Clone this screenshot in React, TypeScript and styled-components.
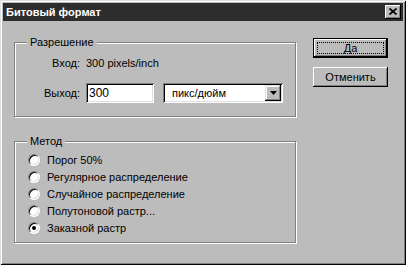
import React from 'react';
import styled, { createGlobalStyle } from 'styled-components';

const GlobalStyle = createGlobalStyle`
  html, body {
    margin: 0;
    padding: 0;
    background: #bcbcbc;
  }
  body {
    font-family: 'Liberation Sans', Arial, sans-serif;
    font-size: 11px;
    color: #000;
  }
`;

const FACE = '#bcbcbc';

const raised = `
  box-shadow: inset -1px -1px 0 #000, inset 1px 1px 0 #fff, inset -2px -2px 0 #808080;
`;
const sunken = `
  box-shadow: inset 1px 1px 0 #808080, inset -1px -1px 0 #fff, inset 2px 2px 0 #000, inset -2px -2px 0 #dfdfdf;
`;

const methods = [
  'Порог 50%',
  'Регулярное распределение',
  'Случайное распределение',
  'Полутоновой растр...',
  'Заказной растр',
];

const App = () => {
  return (
    <>
      <GlobalStyle />
      <Window>
        <TitleBar>
          <Title>Битовый формат</Title>
          <CloseButton aria-label="Закрыть">
            <svg width="8" height="7" viewBox="0 0 8 7">
              <path d="M0.5 0.5 L7.5 6.5 M7.5 0.5 L0.5 6.5" stroke="#000" strokeWidth="1.7" />
            </svg>
          </CloseButton>
        </TitleBar>
        <Content>
          <LeftColumn>
            <Group $height={75}>
              <Legend>Разрешение</Legend>
              <ResolutionGrid>
                <Label>Вход:</Label>
                <Value>300 pixels/inch</Value>
                <Label>Выход:</Label>
                <TextField>300</TextField>
                <Select>
                  <span>пикс/дюйм</span>
                  <ArrowButton>
                    <svg width="7" height="4" viewBox="0 0 7 4">
                      <path d="M0 0 H7 L3.5 4 Z" fill="#000" />
                    </svg>
                  </ArrowButton>
                </Select>
              </ResolutionGrid>
            </Group>
            <Group $height={102} $top={24}>
              <Legend>Метод</Legend>
              <RadioList>
                {methods.map((m, i) => (
                  <RadioRow key={m}>
                    <RadioCircle $checked={i === methods.length - 1} />
                    <span>{m}</span>
                  </RadioRow>
                ))}
              </RadioList>
            </Group>
          </LeftColumn>
          <RightColumn>
            <DefaultButton>
              <FocusRing>Да</FocusRing>
            </DefaultButton>
            <Button>Отменить</Button>
          </RightColumn>
        </Content>
      </Window>
    </>
  );
};
export default App;

const Window = styled.div`
  width: 406px;
  height: 265px;
  box-sizing: border-box;
  padding: 3px;
  background: ${FACE};
  box-shadow: inset 1px 1px 0 #dfdfdf, inset -1px -1px 0 #000, inset 2px 2px 0 #fff,
    inset -2px -2px 0 #808080;
  display: flex;
  flex-direction: column;
`;
const TitleBar = styled.div`
  height: 18px;
  background: #2d2d2d;
  display: flex;
  align-items: center;
  justify-content: space-between;
  padding: 0 2px 0 3px;
`;
const Title = styled.div`
  color: #fff;
  font-weight: 700;
  font-size: 11px;
`;
const CloseButton = styled.div`
  width: 16px;
  height: 14px;
  box-sizing: border-box;
  background: ${FACE};
  ${raised}
  display: flex;
  align-items: center;
  justify-content: center;
  padding-bottom: 1px;
`;
const Content = styled.div`
  display: flex;
  align-items: flex-start;
  gap: 17px;
  padding: 15px 0 0 11px;
`;
const LeftColumn = styled.div`
  display: flex;
  flex-direction: column;
`;
const RightColumn = styled.div`
  display: flex;
  flex-direction: column;
  gap: 9px;
  padding-top: 2px;
`;
const Group = styled.div<{ $height: number; $top?: number }>`
  position: relative;
  width: 282px;
  height: ${(p) => p.$height}px;
  margin-top: ${(p) => p.$top ?? 6}px;
  box-sizing: border-box;
  border: 1px solid #808080;
  box-shadow: 1px 1px 0 #fff, inset 1px 1px 0 #fff;
`;
const Legend = styled.span`
  position: absolute;
  top: -7px;
  left: 12px;
  padding: 0 3px;
  line-height: 13px;
  background: ${FACE};
`;
const ResolutionGrid = styled.div`
  display: grid;
  grid-template-columns: 65px auto auto;
  grid-template-rows: 16px 20px;
  column-gap: 6px;
  row-gap: 12px;
  align-items: center;
  padding-top: 12px;
  justify-content: start;
`;
const Label = styled.div`
  text-align: right;
`;
const Value = styled.div`
  grid-column: 2 / 4;
`;
const TextField = styled.div`
  width: 68px;
  height: 20px;
  box-sizing: border-box;
  background: #fff;
  ${sunken}
  padding: 0 3px;
  display: flex;
  align-items: center;
  font-size: 12px;
`;
const Select = styled.div`
  width: 120px;
  height: 20px;
  margin-left: 3px;
  box-sizing: border-box;
  background: #fff;
  ${sunken}
  display: flex;
  align-items: center;
  justify-content: space-between;
  padding: 2px 2px 2px 9px;
  font-size: 11px;
`;
const ArrowButton = styled.div`
  width: 16px;
  height: 16px;
  box-sizing: border-box;
  background: ${FACE};
  box-shadow: inset -1px -1px 0 #000, inset 1px 1px 0 #dfdfdf, inset -2px -2px 0 #808080,
    inset 2px 2px 0 #fff;
  display: flex;
  align-items: center;
  justify-content: center;
`;
const RadioList = styled.div`
  display: flex;
  flex-direction: column;
  padding: 9px 0 0 13px;
`;
const RadioRow = styled.div`
  height: 17px;
  display: flex;
  align-items: center;
  gap: 7px;
  font-size: 11px;
`;
const RadioCircle = styled.div<{ $checked: boolean }>`
  position: relative;
  width: 12px;
  height: 12px;
  box-sizing: border-box;
  border-radius: 50%;
  border: 1px solid;
  border-color: #808080 #fff #fff #808080;
  background: #fff;
  box-shadow: inset 1px 1px 0 #000, inset -1px -1px 0 #dfdfdf;
  &::after {
    content: '';
    display: ${(p) => (p.$checked ? 'block' : 'none')};
    position: absolute;
    left: 3px;
    top: 3px;
    width: 4px;
    height: 4px;
    border-radius: 50%;
    background: #000;
  }
`;
const Button = styled.div`
  width: 75px;
  height: 20px;
  box-sizing: border-box;
  background: ${FACE};
  ${raised}
  display: flex;
  align-items: center;
  justify-content: center;
  font-size: 11px;
`;
const DefaultButton = styled.div`
  width: 75px;
  height: 20px;
  box-sizing: border-box;
  background: ${FACE};
  border: 1px solid #000;
  box-shadow: inset -1px -1px 0 #000, inset 1px 1px 0 #fff, inset -2px -2px 0 #808080;
  padding: 3px;
  display: flex;
`;
const FocusRing = styled.div`
  flex: 1;
  border: 1px dotted #000;
  display: flex;
  align-items: center;
  justify-content: center;
  font-size: 11px;
`;
